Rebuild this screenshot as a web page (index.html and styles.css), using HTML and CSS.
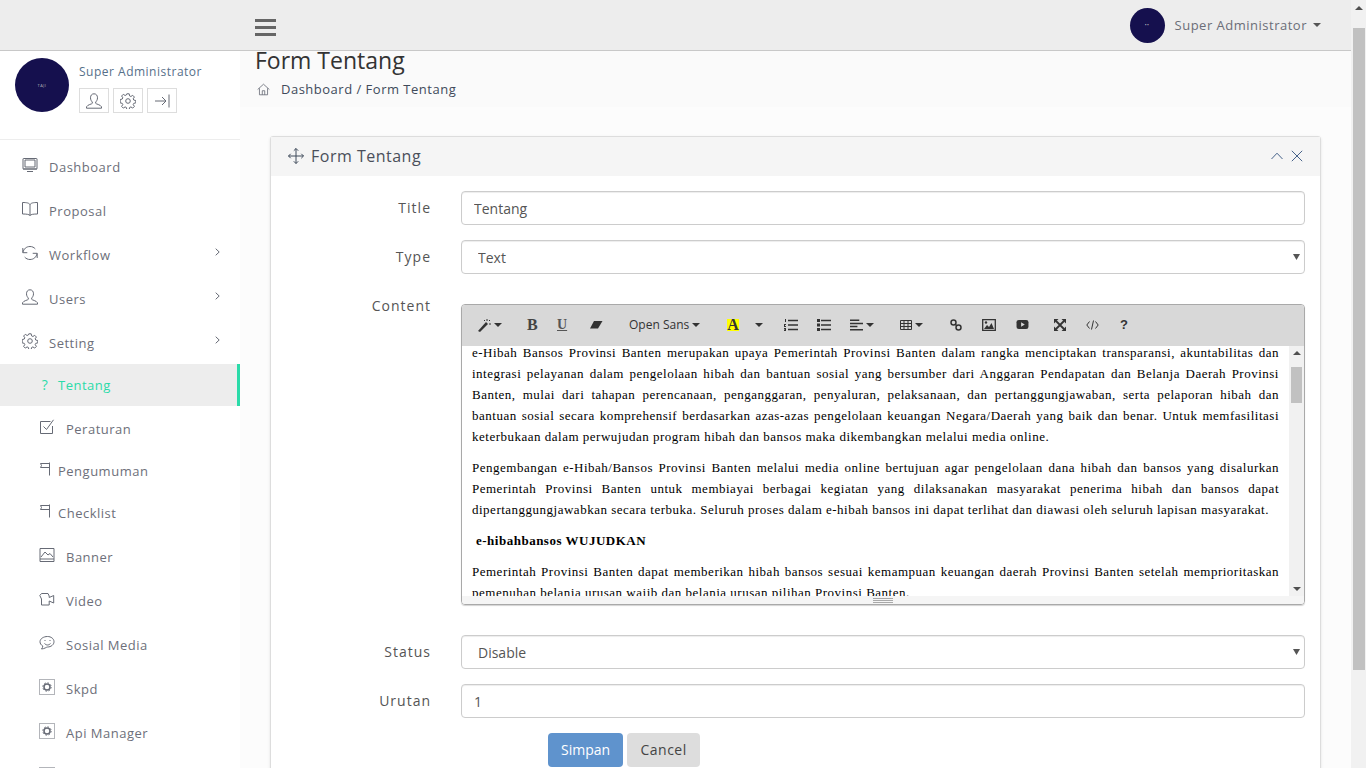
FILE: index.html
```html
<!DOCTYPE html>
<html>
<head>
    <title>Form Tentang</title>
    <link rel="stylesheet" href="styles.css">
</head>
<body>
    <svg class="sprite" width="0" height="0">
        <symbol id="i-desktop" viewBox="0 0 16 16"><path d="M1.500 1.500h13a.5.5 0 0 1 .5.5v9.500a.5.5 0 0 1-.5.5h-13a.5.5 0 0 1-.5-.5V2a.5.5 0 0 1 .5-.5zM3 3h10v7H3zM5 14.500h6M1 12h14"/></symbol>
        <symbol id="i-book" viewBox="0 0 16 16"><path d="M8 3.500C7 2 5 1.500.5 1.500v11.500c4 0 6.500.3 7.500 1.500 1-1.200 3.500-1.500 7.500-1.500V1.500C11 1.500 9 2 8 3.500zM8 3.500v11"/></symbol>
        <symbol id="i-refresh" viewBox="0 0 16 16"><path d="M1 7.500C1.500 4 4.300 1.500 8 1.500c2.200 0 4 .9 5.300 2.400M15 8.500c-.5 3.500-3.300 6-7 6-2.200 0-4-.9-5.300-2.400M.8 3v4.700h4.500M15.200 13V8.300h-4.500"/></symbol>
        <symbol id="i-user" viewBox="0 0 16 16"><path d="M8 .8c2.200 0 3.500 1.600 3.500 4 0 2-1 3.400-1.800 4.200v1.300c0 .7 4.800 1.300 5.800 3.500v1.400H.5v-1.400c1-2.200 5.800-2.800 5.800-3.500V9C5.500 8.200 4.500 6.800 4.500 4.800c0-2.400 1.300-4 3.500-4z"/></symbol>
        <symbol id="i-gear" viewBox="0 0 16 16"><path d="M6.800.8h2.400l.4 2.100 1.300.6 1.800-1.200 1.700 1.700-1.200 1.800.6 1.300 2 .4v2.400l-2 .4-.6 1.300 1.200 1.800-1.700 1.700-1.800-1.200-1.300.6-.4 2H6.800l-.4-2-1.300-.6-1.800 1.200-1.700-1.700 1.200-1.800-.6-1.300-2-.4V6.500l2-.4.6-1.300L1.600 3l1.700-1.700 1.800 1.200 1.300-.6z"/><circle cx="8" cy="8" r="2.300"/></symbol>
        <symbol id="i-login" viewBox="0 0 16 16"><path d="M1 8h10.500M8 4l4 4-4 4M15 1.500v13"/></symbol>
        <symbol id="i-check" viewBox="0 0 16 16"><path d="M11.500 2.500H1.500v12h12V7M4.500 7.500l3 3L14.500.8"/></symbol>
        <symbol id="i-flag" viewBox="0 0 12 14"><path d="M10.500.5v13M10.500 1.500h-9l1 2-1 2h9"/></symbol>
        <symbol id="i-picture" viewBox="0 0 16 16"><path d="M1 1.500h14v13H1zM1 12h14M2 10l4-5 3 3 2-1.500 3 3.500"/></symbol>
        <symbol id="i-camera" viewBox="0 0 16 16"><path d="M2.500 2.500h6.500l1.200 2.500v1.500l4.500-2v7.500l-4.500-2v4H2.500V8L.8 4.500z"/></symbol>
        <symbol id="i-emotion" viewBox="0 0 16 16"><path d="M8.500 1.500c3.600 0 6.500 2.300 6.500 5.200s-2.900 5.300-6.500 5.300c-1 0-3 1.800-6 2 .8-1 1.300-2 1.300-3C2 10 1 8.500 1 6.700 1 3.800 4.500 1.500 8.500 1.500zM5.500 8.500c2 2 4 2 6 0"/><path d="M6 5v1M11 5v1"/></symbol>
        <symbol id="i-gearbox" viewBox="0 0 16 16"><path stroke-dasharray="1 1" d="M.5.500h15v15H.5z"/><circle cx="8" cy="8" r="3"  stroke-width="1.500"/><circle cx="8" cy="8" r="4.200" stroke-dasharray="1.500 1.800"/></symbol>
        <symbol id="i-home" viewBox="0 0 16 16"><path d="M.8 8L8 1.500 15.200 8M3 6.500v8h10v-8M6.500 14.500V9.500h3v5"/></symbol>
        <symbol id="i-move" viewBox="0 0 16 16"><path d="M8 .5v15M.5 8h15M5.800 2.700L8 .5l2.200 2.200M5.800 13.300L8 15.500l2.200-2.200M2.700 5.800L.5 8l2.200 2.200M13.300 5.800L15.500 8l-2.200 2.200"/></symbol>
        <symbol id="i-up" viewBox="0 0 12 8"><path d="M.5 7L6 1.200 11.500 7"/></symbol>
        <symbol id="i-close" viewBox="0 0 12 12"><path d="M.8.800l10.400 10.400M11.200.800L.8 11.200"/></symbol>
        <symbol id="i-chevron" viewBox="0 0 5 8"><path d="M.7.700L4.200 4 .7 7.300"/></symbol>
    </svg>

    <div class="window">
        <div class="page">
            <header class="navbar">
                <div class="navbar-brand"></div>
                <div class="burger"><span></span><span></span><span></span></div>
                <div class="nav-user">
                    <div class="avatar avatar-small"><span>&bull;&bull;</span></div>
                    <span class="nav-user-name">Super Administrator</span>
                    <span class="caret"></span>
                </div>
            </header>

            <div class="layout">
                <aside class="sidebar">
                    <div class="profile">
                        <div class="avatar avatar-big"><span>TAJI</span></div>
                        <div class="profile-info">
                            <div class="profile-name">Super Administrator</div>
                            <div class="profile-buttons">
                                <a class="square-btn"><svg class="icon"><use href="#i-user"/></svg></a>
                                <a class="square-btn"><svg class="icon"><use href="#i-gear"/></svg></a>
                                <a class="square-btn"><svg class="icon"><use href="#i-login"/></svg></a>
                            </div>
                        </div>
                    </div>

                    <ul class="menu">
                        <li class="menu-item"><svg class="icon"><use href="#i-desktop"/></svg><span>Dashboard</span></li>
                        <li class="menu-item"><svg class="icon"><use href="#i-book"/></svg><span>Proposal</span></li>
                        <li class="menu-item"><svg class="icon"><use href="#i-refresh"/></svg><span>Workflow</span><svg class="chevron"><use href="#i-chevron"/></svg></li>
                        <li class="menu-item"><svg class="icon"><use href="#i-user"/></svg><span>Users</span><svg class="chevron"><use href="#i-chevron"/></svg></li>
                        <li class="menu-item"><svg class="icon"><use href="#i-gear"/></svg><span>Setting</span><svg class="chevron"><use href="#i-chevron"/></svg></li>
                        <li class="menu-item sub narrow active"><i class="qmark">?</i><span>Tentang</span></li>
                        <li class="menu-item sub"><svg class="icon"><use href="#i-check"/></svg><span>Peraturan</span></li>
                        <li class="menu-item sub narrow"><svg class="icon flag"><use href="#i-flag"/></svg><span>Pengumuman</span></li>
                        <li class="menu-item sub narrow"><svg class="icon flag"><use href="#i-flag"/></svg><span>Checklist</span></li>
                        <li class="menu-item sub"><svg class="icon"><use href="#i-picture"/></svg><span>Banner</span></li>
                        <li class="menu-item sub"><svg class="icon"><use href="#i-camera"/></svg><span>Video</span></li>
                        <li class="menu-item sub"><svg class="icon"><use href="#i-emotion"/></svg><span>Sosial Media</span></li>
                        <li class="menu-item sub"><svg class="icon"><use href="#i-gearbox"/></svg><span>Skpd</span></li>
                        <li class="menu-item sub"><svg class="icon"><use href="#i-gearbox"/></svg><span>Api Manager</span></li>
                        <li class="menu-item sub"><svg class="icon"><use href="#i-gearbox"/></svg></li>
                    </ul>
                </aside>

                <main class="content">
                    <div class="page-head">
                        <h1>Form Tentang</h1>
                        <div class="breadcrumb">
                            <svg class="icon"><use href="#i-home"/></svg>
                            <span>Dashboard / Form Tentang</span>
                        </div>
                    </div>

                    <section class="panel">
                        <div class="panel-head">
                            <svg class="icon"><use href="#i-move"/></svg>
                            <span class="panel-title">Form Tentang</span>
                            <svg class="tool tool-up"><use href="#i-up"/></svg>
                            <svg class="tool tool-close"><use href="#i-close"/></svg>
                        </div>

                        <form class="panel-body">
                            <div class="form-row">
                                <label>Title</label>
                                <input class="field" type="text" value="Tentang">
                            </div>
                            <div class="form-row">
                                <label>Type</label>
                                <select class="field field-select"><option>Text</option></select>
                            </div>
                            <div class="form-row row-editor">
                                <label>Content</label>
                                <div class="editor">
                                    <div class="toolbar">
                                        <span class="tb tb-wand"><svg viewBox="0 0 14 14" width="14" height="14"><path d="M1 13L9 4l2 2-8 8z" fill="#333"/><path d="M10 1v2M12 3l1-1M12 6h2M7 2l1 1" stroke="#333" fill="none"/></svg><b class="caret"></b></span>
                                        <span class="tb tb-b">B</span>
                                        <span class="tb tb-u">U</span>
                                        <span class="tb tb-eraser"><svg viewBox="0 0 14 10" width="14" height="10"><path d="M5 1h8.500L9 8.500H1z" fill="#333"/></svg></span>
                                        <span class="tb tb-font">Open Sans<b class="caret"></b></span>
                                        <span class="tb tb-color">A</span>
                                        <span class="tb tb-colordrop"><b class="caret"></b></span>
                                        <span class="tb tb-ol"><svg viewBox="0 0 14 12" width="14" height="12"><path d="M4 1.500h10M4 6h10M4 10.500h10" stroke="#333" stroke-width="1.700"/><path d="M1 0h1v3H1zM0 5h2v1H1v1h1v1H0zM0 9h2v3H0v-1h1v-.5H0z" fill="#333"/></svg></span>
                                        <span class="tb tb-ul"><svg viewBox="0 0 14 12" width="14" height="12"><path d="M4 1.500h10M4 6h10M4 10.500h10" stroke="#333" stroke-width="1.700"/><path d="M0 0h3v3H0zM0 4.500h3v3H0zM0 9h3v3H0z" fill="#333"/></svg></span>
                                        <span class="tb tb-align"><svg viewBox="0 0 14 12" width="14" height="12"><path d="M0 1h10M0 4.300h14M0 7.600h8M0 11h14" stroke="#333" stroke-width="1.600"/></svg><b class="caret"></b></span>
                                        <span class="tb tb-table"><svg viewBox="0 0 12 10" width="12" height="10"><path d="M.5.500h11v9H.5zM.5 3.500h11M.5 6.500h11M4 .5v9M8 .5v9" fill="none" stroke="#333"/></svg><b class="caret"></b></span>
                                        <span class="tb tb-link"><svg viewBox="0 0 12 12" width="12" height="12"><circle cx="3.500" cy="3.500" r="2.500" fill="none" stroke="#333" stroke-width="1.500"/><circle cx="8.500" cy="8.500" r="2.500" fill="none" stroke="#333" stroke-width="1.500"/><path d="M5 5l2 2" stroke="#333" stroke-width="1.500"/></svg></span>
                                        <span class="tb tb-pic"><svg viewBox="0 0 14 12" width="14" height="12"><path d="M.7.700h12.600v10.600H.7z" fill="none" stroke="#333" stroke-width="1.300"/><path d="M2 10l3-4 2 2 2.500-4L12 10z" fill="#333"/><circle cx="4" cy="3.500" r="1.200" fill="#333"/></svg></span>
                                        <span class="tb tb-video"><svg viewBox="0 0 14 12" width="13" height="11"><rect x=".5" y="1" width="13" height="10" rx="2.500" fill="#333"/><path d="M5.500 3.500v5l4-2.500z" fill="#d8d8d8"/></svg></span>
                                        <span class="tb tb-full"><svg viewBox="0 0 12 12" width="12" height="12"><path d="M2 2l8 8M10 2l-8 8" stroke="#333" stroke-width="1.800"/><path d="M0 0h4.500L0 4.500zM12 0v4.500L7.500 0zM0 12V7.500L4.500 12zM12 12H7.500L12 7.500z" fill="#333"/></svg></span>
                                        <span class="tb tb-code"><svg viewBox="0 0 13 10" width="13" height="10"><path d="M3.500 1.500L.8 5l2.700 3.500M9.500 1.500L12.200 5 9.500 8.500M7.500.5l-2 9" fill="none" stroke="#333"/></svg></span>
                                        <span class="tb tb-help">?</span>
                                    </div>
                                    <div class="editor-area">
                                        <div class="editor-text">
                                            <p>e-Hibah Bansos Provinsi Banten merupakan upaya Pemerintah Provinsi Banten dalam rangka menciptakan transparansi, akuntabilitas dan integrasi pelayanan dalam pengelolaan hibah dan bantuan sosial yang bersumber dari Anggaran Pendapatan dan Belanja Daerah Provinsi Banten, mulai dari tahapan perencanaan, penganggaran, penyaluran, pelaksanaan, dan pertanggungjawaban, serta pelaporan hibah dan bantuan sosial secara komprehensif berdasarkan azas-azas pengelolaan keuangan Negara/Daerah yang baik dan benar. Untuk memfasilitasi keterbukaan dalam perwujudan program hibah dan bansos maka dikembangkan melalui media online.</p>
                                            <p>Pengembangan e-Hibah/Bansos Provinsi Banten melalui media online bertujuan agar pengelolaan dana hibah dan bansos yang disalurkan Pemerintah Provinsi Banten untuk membiayai berbagai kegiatan yang dilaksanakan masyarakat penerima hibah dan bansos dapat dipertanggungjawabkan secara terbuka. Seluruh proses dalam e-hibah bansos ini dapat terlihat dan diawasi oleh seluruh lapisan masyarakat.</p>
                                            <p class="editor-heading">e-hibahbansos WUJUDKAN</p>
                                            <p>Pemerintah Provinsi Banten dapat memberikan hibah bansos sesuai kemampuan keuangan daerah Provinsi Banten setelah memprioritaskan pemenuhan belanja urusan wajib dan belanja urusan pilihan Provinsi Banten.</p>
                                        </div>
                                        <div class="editor-scroll">
                                            <span class="arrow-up"></span>
                                            <div class="editor-scroll-track"><div class="editor-thumb"></div></div>
                                            <span class="arrow-down"></span>
                                        </div>
                                    </div>
                                    <div class="editor-status"><div class="grip"></div></div>
                                </div>
                            </div>
                            <div class="form-row">
                                <label>Status</label>
                                <select class="field field-select"><option>Disable</option></select>
                            </div>
                            <div class="form-row">
                                <label>Urutan</label>
                                <input class="field" type="text" value="1">
                            </div>
                            <div class="form-actions">
                                <button class="btn btn-save" type="button">Simpan</button>
                                <button class="btn btn-cancel" type="button">Cancel</button>
                            </div>
                        </form>
                    </section>
                </main>
            </div>
        </div>

        <div class="scrollbar">
            <span class="arrow-up"></span>
            <div class="scrollbar-thumb"></div>
        </div>
    </div>
</body>
</html>
```

FILE: styles.css
```css
* {
    box-sizing: border-box;
}

html, body {
    margin: 0;
    height: 100%;
    overflow: hidden;
}

body {
    font-family: "Open Sans", sans-serif;
    font-size: 13px;
    letter-spacing: 0.5px;
    color: #676a75;
    background-color: #fcfcfc;
}

.sprite {
    display: block;
    height: 0;
}

.icon {
    width: 16px;
    height: 16px;
    fill: none;
    stroke: #666a75;
    stroke-width: 1;
    flex: none;
}

.window {
    display: flex;
    height: 768px;
}

.page {
    width: 1351px;
    display: flex;
    flex-direction: column;
    height: 768px;
}

/* fake page scrollbar */
.scrollbar {
    width: 15px;
    background-color: #f1f1f1;
    padding: 6px 2px 0;
    display: flex;
    flex-direction: column;
    align-items: center;
}

.scrollbar-thumb {
    width: 12px;
    height: 642px;
    margin-top: 18px;
    background-color: #c1c1c1;
}

.arrow-up {
    width: 0;
    height: 0;
    border-left: 4px solid transparent;
    border-right: 4px solid transparent;
    border-bottom: 4px solid #505050;
}

.arrow-down {
    width: 0;
    height: 0;
    border-left: 4px solid transparent;
    border-right: 4px solid transparent;
    border-top: 4px solid #505050;
}

/* navbar */
.navbar {
    height: 51px;
    flex: none;
    display: flex;
    align-items: center;
    background-color: #ededed;
    border-bottom: 1px solid #c8c8c8;
}

.navbar-brand {
    width: 255px;
}

.burger {
    width: 21px;
    display: flex;
    flex-direction: column;
    gap: 4px;
    margin-top: 5px;
}

.burger span {
    display: block;
    height: 3px;
    background-color: #666;
}

.nav-user {
    margin-left: auto;
    margin-right: 30px;
    display: flex;
    align-items: center;
}

.nav-user-name {
    margin-left: 10px;
    font-size: 13px;
    color: #6b6e78;
}

.caret {
    display: inline-block;
    width: 0;
    height: 0;
    margin-left: 6px;
    border-left: 4px solid transparent;
    border-right: 4px solid transparent;
    border-top: 4px solid #555;
}

.avatar {
    border-radius: 50%;
    background-color: #15104e;
    color: #bbb;
    display: flex;
    align-items: center;
    justify-content: center;
    flex: none;
}

.avatar-small {
    width: 35px;
    height: 35px;
    font-size: 5px;
}

.avatar-big {
    width: 54px;
    height: 54px;
    font-size: 4px;
}

/* sidebar */
.layout {
    flex: 1;
    display: flex;
    min-height: 0;
}

.sidebar {
    width: 240px;
    flex: none;
    background-color: #fff;
    overflow: hidden;
}

.profile {
    height: 89px;
    display: flex;
    padding: 7px 15px 0;
    border-bottom: 1px solid #ededed;
}

.profile-info {
    margin-left: 10px;
}

.profile-name {
    font-size: 12px;
    line-height: 16px;
    margin-top: 6px;
    color: #56708a;
}

.profile-buttons {
    display: flex;
    gap: 4px;
    margin-top: 8px;
}

.square-btn {
    width: 30px;
    height: 25px;
    display: flex;
    align-items: center;
    justify-content: center;
    border: 1px solid #ddd;
}

.menu {
    list-style: none;
    margin: 4px 0 0;
    padding: 0;
}

.menu-item {
    height: 44px;
    display: flex;
    align-items: center;
    padding: 2px 20px 0 22px;
    font-size: 13px;
    color: #6d6f7a;
}

.menu-item .icon {
    margin-top: -4px;
}

.menu-item span {
    margin-left: 11px;
    flex: 1;
}

.chevron {
    width: 5px;
    height: 8px;
    margin-top: -7px;
    fill: none;
    stroke: #666a75;
    stroke-width: 1;
}

.menu-item.sub {
    padding-left: 39px;
}

.menu-item.narrow {
    height: 42px;
    padding-top: 0;
}

.menu-item.narrow span {
    margin-left: 7px;
}

.icon.flag {
    width: 12px;
    height: 14px;
}

.qmark {
    font-style: normal;
    font-size: 14px;
    width: 12px;
    text-align: center;
    color: #2bdba9;
    margin-top: -2px;
}

.menu-item.active {
    background-color: #ededed;
    border-right: 3px solid #2bdba9;
    color: #2bdba9;
}

/* content */
.content {
    flex: 1;
    min-width: 0;
    overflow: hidden;
    background-color: #fcfcfc;
}

.page-head {
    height: 56px;
    padding: 0 15px;
    background-color: #fafafa;
}

.page-head h1 {
    margin: 0;
    font-size: 23px;
    font-weight: 400;
    line-height: 18px;
    letter-spacing: 0;
    color: #333;
}

.breadcrumb {
    display: flex;
    align-items: center;
    margin-top: 10px;
    height: 20px;
    font-size: 13px;
    color: #3f4a5a;
}

.breadcrumb .icon {
    width: 13px;
    height: 13px;
    margin-left: 2px;
}

.breadcrumb span {
    margin-left: 11px;
}

.panel {
    margin: 29px 30px 0;
    width: 1051px;
    background-color: #fff;
    border: 1px solid #ddd;
    border-radius: 3px 3px 0 0;
    box-shadow: 0 1px 3px rgba(0, 0, 0, 0.1);
}

.panel-head {
    height: 39px;
    display: flex;
    align-items: center;
    padding: 0 17px 2px;
    background-color: #f5f5f5;
}

.panel-head .icon {
    stroke: #3f4a5a;
}

.panel-title {
    margin-left: 7px;
    font-size: 16px;
    color: #4a4f5a;
    flex: 1;
}

.tool {
    fill: none;
    stroke: #47638a;
    stroke-width: 1;
}

.tool-up {
    width: 12px;
    height: 8px;
    margin-right: 8px;
}

.tool-close {
    width: 12px;
    height: 12px;
}

.panel-body {
    padding: 15px 15px 40px 0;
}

.form-row {
    display: flex;
    margin-bottom: 15px;
}

.form-row label {
    width: 160px;
    padding-top: 7px;
    margin-right: 30px;
    text-align: right;
    font-size: 14px;
    line-height: 20px;
    letter-spacing: 1px;
    color: #555;
}

.field {
    flex: 1;
    height: 34px;
    padding: 6px 12px;
    font-family: "Open Sans", sans-serif;
    font-size: 14px;
    letter-spacing: 0;
    color: #555;
    background-color: #fff;
    border: 1px solid #ccc;
    border-radius: 4px;
    box-shadow: inset 0 1px 1px rgba(0, 0, 0, 0.075);
}

.field-select {
    appearance: none;
    padding-left: 16px;
    background-image: url("data:image/svg+xml,%3Csvg xmlns='http://www.w3.org/2000/svg' width='7' height='6'%3E%3Cpath d='M0 0h7L3.500 6z' fill='%23555'/%3E%3C/svg%3E");
    background-repeat: no-repeat;
    background-position: right 4px center;
}

.row-editor {
    margin-bottom: 30px;
}

/* editor */
.editor {
    flex: 1;
    height: 301px;
    margin-top: 15px;
    display: flex;
    flex-direction: column;
    border: 1px solid #a9a9a9;
    border-radius: 4px;
    overflow: hidden;
    box-shadow: 0 1px 1px rgba(0, 0, 0, 0.175);
}

.toolbar {
    height: 41px;
    flex: none;
    display: flex;
    align-items: center;
    padding-bottom: 2px;
    background-color: #d8d8d8;
    color: #333;
    letter-spacing: 0;
}

.tb {
    display: flex;
    align-items: center;
    flex: none;
    white-space: nowrap;
}

.tb .caret {
    border-top-color: #333;
    margin-left: 3px;
}

.tb-wand { margin-left: 15px; width: 25px; }
.tb-b { margin-left: 25px; width: 13px; font: bold 16px "Liberation Serif", serif; color: #444; }
.tb-u { margin-left: 17px; width: 13px; font: bold 14px "Liberation Serif", serif; color: #555; text-decoration: underline; }
.tb-eraser { margin-left: 19px; width: 14px; }
.tb-font { margin-left: 26px; width: 71px; font-size: 12px; }
.tb-color { margin-left: 27px; width: 12px; height: 12px; justify-content: center; font: bold 16px "Liberation Serif", serif; background-color: #ff0; }
.tb-colordrop { margin-left: 16px; width: 10px; }
.tb-colordrop .caret { margin-left: 0; }
.tb-ol { margin-left: 19px; width: 14px; }
.tb-ul { margin-left: 19px; width: 14px; }
.tb-align { margin-left: 19px; width: 24px; }
.tb-table { margin-left: 26px; width: 23px; }
.tb-link { margin-left: 27px; width: 12px; }
.tb-pic { margin-left: 20px; width: 14px; }
.tb-video { margin-left: 20px; width: 14px; }
.tb-full { margin-left: 24px; width: 12px; }
.tb-code { margin-left: 20px; width: 13px; }
.tb-help { margin-left: 21px; width: 8px; font: bold 13px "Liberation Sans", sans-serif; }

.editor-area {
    flex: 1;
    min-height: 0;
    display: flex;
    overflow: hidden;
}

.editor-text {
    flex: 1;
    min-width: 0;
    margin-top: -4px;
    padding: 0 10px;
    font-family: "Liberation Serif", serif;
    font-size: 13px;
    line-height: 21px;
    letter-spacing: 0.5px;
    color: #000;
    text-align: justify;
    background-color: #fff;
}

.editor-text p {
    margin: 0 0 10px;
}

.editor-heading {
    font-weight: 700;
    padding-left: 4px;
}

.editor-scroll {
    width: 15px;
    flex: none;
    display: flex;
    flex-direction: column;
    align-items: center;
    padding: 5px 0;
    background-color: #f1f1f1;
}

.editor-scroll-track {
    flex: 1;
    width: 100%;
    padding: 12px 2px 0;
}

.editor-thumb {
    height: 36px;
    background-color: #c1c1c1;
}

.editor-status {
    height: 8px;
    flex: none;
    background-color: #f5f5f5;
    display: flex;
    justify-content: center;
    align-items: center;
}

.grip {
    width: 20px;
    height: 5px;
    border-top: 1px solid #a9a9a9;
    border-bottom: 1px solid #a9a9a9;
    background: linear-gradient(#a9a9a9, #a9a9a9) center / 100% 1px no-repeat;
}

.form-actions {
    display: flex;
    gap: 4px;
    padding-left: 277px;
}

.btn {
    height: 34px;
    padding: 5px 12px 7px;
    font-family: "Open Sans", sans-serif;
    font-size: 14px;
    letter-spacing: 0;
    border: 1px solid transparent;
    border-radius: 4px;
}

.btn-save {
    background-color: #5f93cd;
    color: #fff;
}

.btn-cancel {
    width: 73px;
    letter-spacing: 0.5px;
    background-color: #ddd;
    color: #444;
}
```
